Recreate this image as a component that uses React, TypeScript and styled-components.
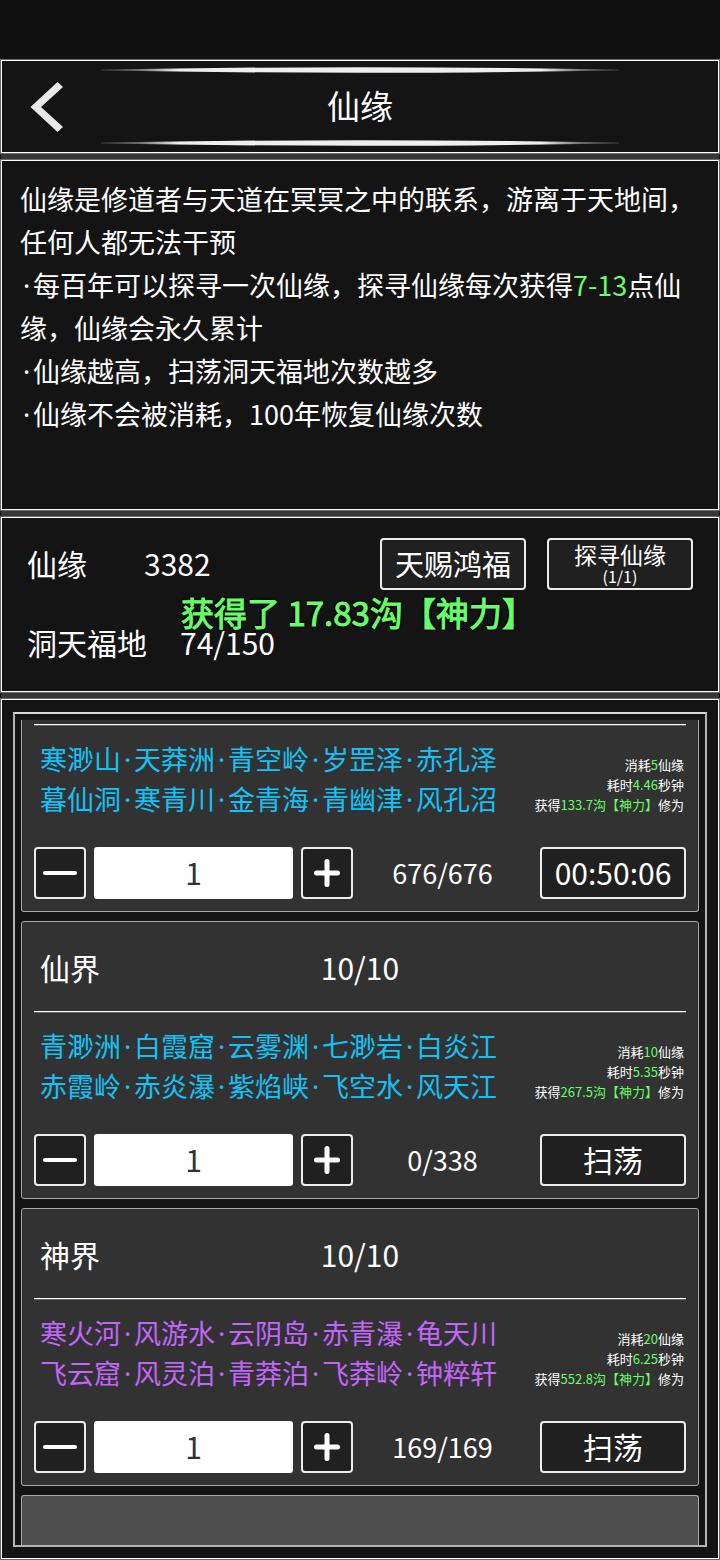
import React, { useState } from 'react';
import styled, { createGlobalStyle } from 'styled-components';

const GlobalStyle = createGlobalStyle`
  * { box-sizing: border-box; }
  body {
    margin: 0;
    background: #101010;
    color: #fff;
    font-family: 'Noto Sans CJK SC', sans-serif;
  }
  button, input { font: inherit; color: inherit; margin: 0; padding: 0; }
  p, h1, h2 { margin: 0; font-weight: 400; }
`;

const Page = styled.div`
  display: flex;
  flex-direction: column;
  min-height: 100vh;
  padding: 60px 1px 1px;
`;

const Panels = styled.main`
  position: relative;
  flex: 1;
  display: flex;
  flex-direction: column;
  gap: 7px;
  background: #363636;
`;

const Panel = styled.section`
  background: #141414;
  border: 1px solid #fff;
  box-shadow: 0 0 0 1px #6a6a6a;
`;

const Header = styled(Panel)`
  display: grid;
  grid-template-columns: 99px 1fr 99px;
  height: 93px;
`;

const BackButton = styled.button`
  display: flex;
  align-items: center;
  padding-left: 27px;
  background: none;
  border: 0;
`;

const TitleBlock = styled.div`
  display: flex;
  flex-direction: column;
  align-items: center;
  justify-content: space-between;
  padding: 5px 0;
`;

const Title = styled.h1`
  padding-bottom: 4px;
  font-size: 33px;
  line-height: 48px;
`;

const GlowLine = styled.svg`
  display: block;
  width: 100%;
  height: 8px;
`;

const Description = styled(Panel)`
  padding: 16px 18px 74px;
  font-size: 27px;
  line-height: 43px;
`;

const Green = styled.span`
  color: #66ff66;
`;

const Dot = styled.span`
  display: inline-block;
  width: 13px;
  line-height: 1;
  text-align: center;
  font-family: 'Noto Sans', sans-serif;
`;

const Stats = styled(Panel)`
  padding: 20px 25px 24px;
  font-size: 30px;
`;

const StatRow = styled.div<{ $gap: number }>`
  display: flex;
  align-items: center;
  gap: ${(p) => p.$gap}px;
  line-height: 44px;
  & + & { margin-top: 30px; }
`;

const StatText = styled.span`
  padding-bottom: 3px;
`;

const StatActions = styled.div`
  display: flex;
  gap: 21px;
  margin-left: auto;
`;

const FrameButton = styled.button<{ $size?: number }>`
  display: flex;
  flex-direction: column;
  align-items: center;
  justify-content: center;
  width: 146px;
  height: 52px;
  padding-bottom: 2px;
  background: #202020;
  border: 2px solid #ececec;
  border-radius: 4px;
  font-size: ${(p) => p.$size ?? 30}px;
  line-height: 1;
`;

const ButtonLabel = styled.span`
  line-height: 26px;
`;

const ButtonNote = styled.small`
  font-size: 16px;
  line-height: 18px;
`;

const Toast = styled.div`
  position: absolute;
  top: 528px;
  left: 0;
  right: 4px;
  text-align: center;
  font-size: 33px;
  line-height: 48px;
  color: #66ff66;
  -webkit-text-stroke: 1px #66ff66;
  text-shadow: 2px 0 1px #000, -2px 0 1px #000, 0 2px 1px #000, 0 -2px 1px #000;
  pointer-events: none;
`;

const ListPanel = styled(Panel)`
  flex: 1;
  display: flex;
  padding: 12px 11px 11px;
`;

const List = styled.div`
  flex: 1;
  display: flex;
  flex-direction: column;
  gap: 9px;
  min-width: 0;
  padding: 6px 6px 0;
  border: 2px solid #b4b4b4;
  border-top-color: #d8d8d8;
`;

const Card = styled.article<{ $cut?: boolean }>`
  padding: ${(p) => (p.$cut ? 4 : 0)}px 12px 12px;
  background: #323232;
  border: 1px solid #a8a8a8;
  border-top-width: ${(p) => (p.$cut ? 0 : 1)}px;
  border-radius: ${(p) => (p.$cut ? '0 0 3px 3px' : '3px')};
`;

const NextCard = styled.div`
  flex: 1;
  background: #4d4d4d;
  border: 1px solid #a8a8a8;
  border-bottom: 0;
  border-radius: 3px 3px 0 0;
`;

const CardHead = styled.header`
  display: grid;
  grid-template-columns: 1fr auto 1fr;
  align-items: center;
  height: 89px;
  padding: 0 6px;
  font-size: 30px;
`;

const CardTitle = styled.h2`
  font-size: 30px;
`;

const Divider = styled.hr`
  height: 1px;
  margin: 0;
  border: 0;
  background: #fff;
  box-shadow: 0 1px #666;
`;

const CardInfo = styled.div`
  display: flex;
  justify-content: space-between;
  padding: 14px 2px 0 6px;
`;

const Places = styled.p<{ $color: string }>`
  font-size: 27px;
  line-height: 40px;
  white-space: nowrap;
  color: ${(p) => p.$color};
`;

const Costs = styled.p`
  padding-top: 16px;
  font-size: 13px;
  line-height: 20px;
  text-align: right;
  white-space: nowrap;
`;

const Controls = styled.div`
  display: grid;
  grid-template-columns: 52px 199px 52px 1fr 146px;
  gap: 8px;
  margin-top: 28px;
`;

const StepButton = styled.button`
  display: flex;
  align-items: center;
  justify-content: center;
  height: 52px;
  background: #202020;
  border: 2px solid #ececec;
  border-radius: 4px;
`;

const Amount = styled.input`
  width: 100%;
  height: 52px;
  padding-bottom: 2px;
  background: #fff;
  border: 0;
  border-radius: 3px;
  color: #323232;
  font-size: 30px;
  text-align: center;
`;

const Count = styled.span`
  padding-right: 8px;
  font-size: 27px;
  line-height: 52px;
  text-align: center;
`;

function Glow({ id }: { id: string }) {
  return (
    <GlowLine viewBox="0 0 520 8" preserveAspectRatio="none" aria-hidden="true">
      <defs>
        <linearGradient id={id} x1="0" x2="1" y1="0" y2="0">
          <stop offset="0" stopColor="#eee" stopOpacity="0.2" />
          <stop offset="0.07" stopColor="#eee" stopOpacity="0.4" />
          <stop offset="0.15" stopColor="#eee" />
          <stop offset="0.85" stopColor="#eee" />
          <stop offset="0.93" stopColor="#eee" stopOpacity="0.4" />
          <stop offset="1" stopColor="#eee" stopOpacity="0.2" />
        </linearGradient>
      </defs>
      <path
        d="M0 3.500 L75 2.500 Q170 1.200 260 1.200 Q350 1.200 445 2.500 L520 3.500 V4.500 L445 5.500 Q350 6.800 260 6.800 Q170 6.800 75 5.500 L0 4.500Z"
        fill={`url(#${id})`}
      />
    </GlowLine>
  );
}

type Realm = {
  name?: string;
  quota?: string;
  color: string;
  places: string[][];
  cost: string;
  seconds: string;
  reward: string;
  count: string;
  action: string;
};

const realms: Realm[] = [
  {
    color: '#12c2f6',
    places: [
      ['寒渺山', '天莽洲', '青空岭', '岁罡泽', '赤孔泽'],
      ['暮仙洞', '寒青川', '金青海', '青幽津', '风孔沼'],
    ],
    cost: '5',
    seconds: '4.46',
    reward: '133.7沟【神力】',
    count: '676/676',
    action: '00:50:06',
  },
  {
    name: '仙界',
    quota: '10/10',
    color: '#12c2f6',
    places: [
      ['青渺洲', '白霞窟', '云雾渊', '七渺岩', '白炎江'],
      ['赤霞岭', '赤炎瀑', '紫焰峡', '飞空水', '风天江'],
    ],
    cost: '10',
    seconds: '5.35',
    reward: '267.5沟【神力】',
    count: '0/338',
    action: '扫荡',
  },
  {
    name: '神界',
    quota: '10/10',
    color: '#c266fa',
    places: [
      ['寒火河', '风游水', '云阴岛', '赤青瀑', '龟天川'],
      ['飞云窟', '风灵泊', '青莽泊', '飞莽岭', '钟粹轩'],
    ],
    cost: '20',
    seconds: '6.25',
    reward: '552.8沟【神力】',
    count: '169/169',
    action: '扫荡',
  },
];

function PlaceLine({ names }: { names: string[] }) {
  return (
    <>
      {names.map((name, i) => (
        <React.Fragment key={name}>
          {i > 0 && <Dot>·</Dot>}
          {name}
        </React.Fragment>
      ))}
    </>
  );
}

function RealmCard({ realm }: { realm: Realm }) {
  const [amount, setAmount] = useState(1);
  return (
    <Card $cut={!realm.name}>
      {realm.name && (
        <CardHead>
          <CardTitle>{realm.name}</CardTitle>
          <span>{realm.quota}</span>
        </CardHead>
      )}
      <Divider />
      <CardInfo>
        <Places $color={realm.color}>
          <PlaceLine names={realm.places[0]} />
          <br />
          <PlaceLine names={realm.places[1]} />
        </Places>
        <Costs>
          消耗<Green>{realm.cost}</Green>仙缘
          <br />
          耗时<Green>{realm.seconds}</Green>秒钟
          <br />
          获得<Green>{realm.reward}</Green>修为
        </Costs>
      </CardInfo>
      <Controls>
        <StepButton aria-label="-" onClick={() => setAmount(Math.max(1, amount - 1))}>
          <svg width="36" height="36" viewBox="0 0 36 36" stroke="#fff" strokeWidth="4" strokeLinecap="round">
            <path d="M3 18H33" />
          </svg>
        </StepButton>
        <Amount
          aria-label={realm.action}
          inputMode="numeric"
          value={amount}
          onChange={(e) => setAmount(Number(e.target.value) || 1)}
        />
        <StepButton aria-label="+" onClick={() => setAmount(amount + 1)}>
          <svg width="36" height="36" viewBox="0 0 36 36" stroke="#fff" strokeWidth="5" strokeLinecap="round">
            <path d="M7.500 18H28.500M18 6.500V29.500" />
          </svg>
        </StepButton>
        <Count>{realm.count}</Count>
        <FrameButton>{realm.action}</FrameButton>
      </Controls>
    </Card>
  );
}

export default function App() {
  return (
    <Page lang="zh-CN">
      <GlobalStyle />
      <Panels>
        <Header as="header">
          <BackButton aria-label="<">
            <svg width="36" height="52" viewBox="0 0 36 52">
              <path d="M28.500 1 L34 6 L12 26 L34 46 L28.500 51 L1.500 26Z" fill="#e8e8e8" />
            </svg>
          </BackButton>
          <TitleBlock>
            <Glow id="glow-top" />
            <Title>仙缘</Title>
            <Glow id="glow-bottom" />
          </TitleBlock>
        </Header>

        <Description>
          <p>仙缘是修道者与天道在冥冥之中的联系，游离于天地间，任何人都无法干预</p>
          <p>
            <Dot>·</Dot>每百年可以探寻一次仙缘，探寻仙缘每次获得<Green>7-13</Green>点仙缘，仙缘会永久累计
          </p>
          <p>
            <Dot>·</Dot>仙缘越高，扫荡洞天福地次数越多
          </p>
          <p>
            <Dot>·</Dot>仙缘不会被消耗，100年恢复仙缘次数
          </p>
        </Description>

        <Stats>
          <StatRow $gap={57}>
            <StatText>仙缘</StatText>
            <StatText>3382</StatText>
            <StatActions>
              <FrameButton $size={29}>天赐鸿福</FrameButton>
              <FrameButton $size={23}>
                <ButtonLabel>探寻仙缘</ButtonLabel>
                <ButtonNote>(1/1)</ButtonNote>
              </FrameButton>
            </StatActions>
          </StatRow>
          <StatRow $gap={33}>
            <StatText>洞天福地</StatText>
            <StatText>74/150</StatText>
          </StatRow>
        </Stats>

        <ListPanel>
          <List>
            {realms.map((realm) => (
              <RealmCard key={realm.action + realm.cost} realm={realm} />
            ))}
            <NextCard />
          </List>
        </ListPanel>

        <Toast role="status">获得了 17.83沟【神力】</Toast>
      </Panels>
    </Page>
  );
}
